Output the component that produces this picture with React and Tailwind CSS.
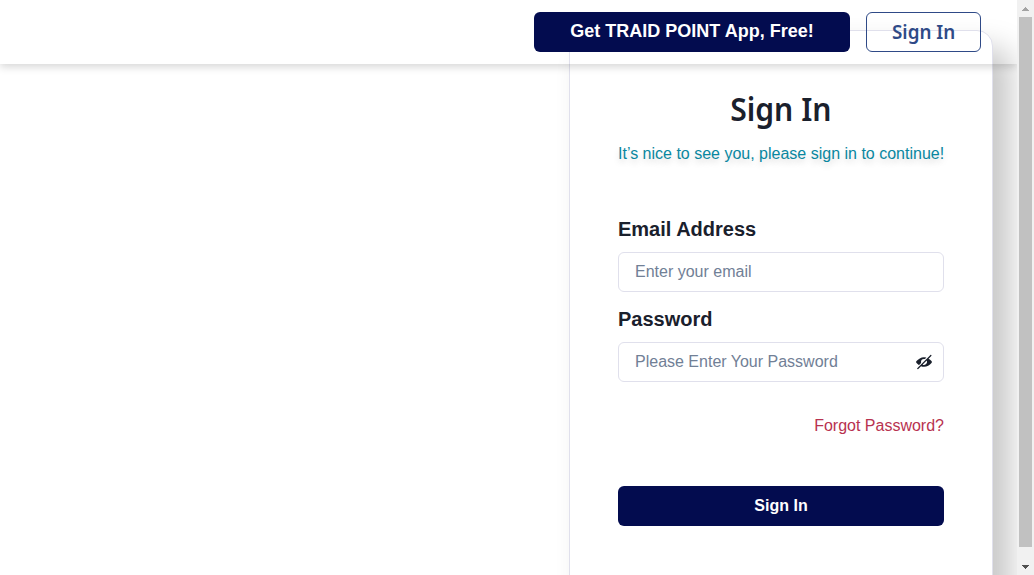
import React from "react";

function ViewOffIcon() {
  return (
    <svg viewBox="0 0 24 24" className="size-4 shrink-0" fill="currentColor" aria-hidden="true">
      <path d="M23.2,10.549a20.954,20.954,0,0,0-4.3-3.6l4-3.995a1,1,0,1,0-1.414-1.414l-.018.018a.737.737,0,0,1-.173.291l-19.5,19.5c-.008.007-.018.009-.026.017a1,1,0,0,0,1.631,1.088l4.146-4.146a11.26,11.26,0,0,0,4.31.939h.3c4.256,0,8.489-2.984,11.051-5.8A2.171,2.171,0,0,0,23.2,10.549ZM16.313,13.27a4.581,4.581,0,0,1-3,3.028,4.3,4.3,0,0,1-3.1-.19.253.253,0,0,1-.068-.407l5.56-5.559a.252.252,0,0,1,.407.067A4.3,4.3,0,0,1,16.313,13.27Z" />
      <path d="M7.615,13.4a.244.244,0,0,0,.061-.24A4.315,4.315,0,0,1,7.5,12,4.5,4.5,0,0,1,12,7.5a4.276,4.276,0,0,1,1.16.173.244.244,0,0,0,.24-.061l1.941-1.942a.254.254,0,0,0-.1-.421A10.413,10.413,0,0,0,12,4.75C7.7,4.692,3.4,7.7.813,10.549a2.15,2.15,0,0,0-.007,2.9,21.209,21.209,0,0,0,3.438,3.03.256.256,0,0,0,.326-.029Z" />
    </svg>
  );
}

function Header() {
  return (
    <header className="absolute inset-x-0 top-0 z-10 flex h-16 items-center justify-end gap-4 pr-9 shadow-[0_3px_8px_rgba(0,0,0,0.16)]">
      <button className="h-10 w-[316px] rounded-md bg-[#030c4f] pb-0.5 text-lg font-bold text-white">
        Get TRAID POINT App, Free!
      </button>
      <button className="flex h-10 w-[115px] items-center justify-center rounded-md border border-[#2f4a87] font-['Noto_Sans',sans-serif] text-xl font-semibold text-[#2f4a87]">
        <span className="inline-block scale-x-[0.94]">Sign In</span>
      </button>
    </header>
  );
}

function Field({ label, placeholder, type, icon }) {
  return (
    <div>
      <label className="block h-[30px] text-xl font-bold leading-[30px]">{label}</label>
      <div className="mt-2 flex h-10 items-center rounded-md border border-[#e0e0ec] pl-4 pr-[11px]">
        <input
          type={type}
          placeholder={placeholder}
          className="h-6 min-w-0 flex-1 bg-transparent text-base outline-none placeholder:text-[#718096]"
        />
        {icon}
      </div>
    </div>
  );
}

function SignInCard() {
  return (
    <main className="mt-[30px] ml-[569px] h-[620px] w-[424px] shrink-0 rounded-2xl border border-[#e0e0ec] bg-white px-12 pt-[54px] shadow-[18px_18px_30px_#c8c8c8]">
      <h1 className="flex h-12 items-center justify-center font-['Noto_Sans',sans-serif] text-[32px] font-semibold">
        <span className="inline-block scale-x-[0.94]">Sign In</span>
      </h1>
      <p className="mt-[9px] text-center text-base leading-6 whitespace-nowrap text-[#0987a0] [text-shadow:0_4px_6px_rgba(0,0,0,0.15)]">
        It’s nice to see you, please sign in to continue!
      </p>
      <form className="mt-12 flex flex-col gap-3">
        <Field label="Email Address" placeholder="Enter your email" type="email" />
        <Field label="Password" placeholder="Please Enter Your Password" type="password" icon={<ViewOffIcon />} />
      </form>
      <a className="mt-8 block text-right text-base leading-6 text-[#b83250]">Forgot Password?</a>
      <button className="mt-12 h-10 w-full rounded-md bg-[#030c4f] text-base font-bold text-white">
        Sign In
      </button>
    </main>
  );
}

function Scrollbar() {
  return (
    <div className="flex w-[17px] shrink-0 flex-col items-center bg-[#f1f1f1]">
      <div className="flex h-[17px] items-center justify-center">
        <svg width="7" height="4" viewBox="0 0 7 4" fill="#a3a3a3" shapeRendering="crispEdges">
          <path d="M3 0h1v1h1v1h1v1h1v1H0V3h1V2h1V1h1z" />
        </svg>
      </div>
      <div className="h-[530px] w-[13px] bg-[#c1c1c1]" />
      <div className="mt-auto flex h-[17px] items-center justify-center">
        <svg width="7" height="4" viewBox="0 0 7 4" fill="#505050" shapeRendering="crispEdges">
          <path d="M0 0h7v1H6v1H5v1H4v1H3V3H2V2H1V1H0z" />
        </svg>
      </div>
    </div>
  );
}

export default function App() {
  return (
    <div className="flex h-[575px] w-[1034px] overflow-hidden bg-white font-['Liberation_Sans',Arial,sans-serif] text-[#1a202c]">
      <div className="relative flex flex-1 items-start overflow-hidden">
        <Header />
        <SignInCard />
      </div>
      <Scrollbar />
    </div>
  );
}
